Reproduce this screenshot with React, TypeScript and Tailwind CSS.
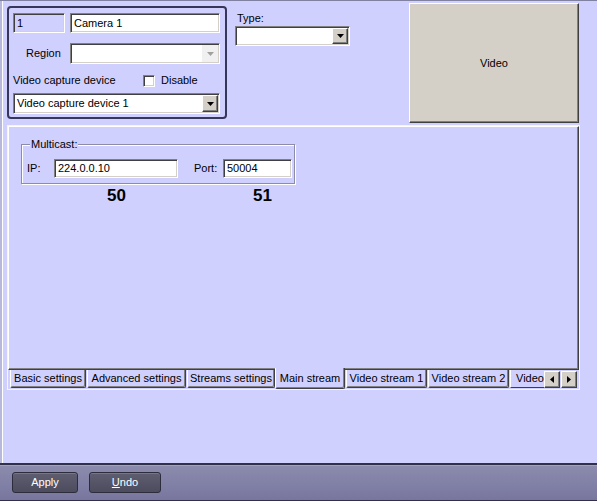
import React from 'react'

const sunken =
  'border border-t-[#808080] border-l-[#808080] border-b-white border-r-white shadow-[inset_1px_1px_0_#404040,inset_-1px_-1px_0_#d4d0c8]'
const raised =
  'border border-t-white border-l-white border-b-[#404040] border-r-[#404040] shadow-[inset_-1px_-1px_0_#808080] bg-[#d4d0c8]'

function DownArrow({ color = '#000' }: { color?: string }) {
  return (
    <svg width="7" height="4" viewBox="0 0 7 4">
      <path d="M0 0h7L3.5 4z" fill={color} />
    </svg>
  )
}

function Select({ className, value, disabled }: { className: string; value?: string; disabled?: boolean }) {
  return (
    <div className={`flex items-stretch bg-white ${sunken} ${className}`}>
      <div className="flex-1 pl-[3px] flex items-center whitespace-nowrap overflow-hidden">{value}</div>
      {disabled ? (
        <div className="w-[16px] m-[1px] flex items-center justify-center bg-[#f0f0f0]">
          <DownArrow color="#a0a0a0" />
        </div>
      ) : (
        <div className={`w-[16px] m-[1px] flex items-center justify-center ${raised}`}>
          <DownArrow />
        </div>
      )}
    </div>
  )
}

function Tab({ label, w }: { label: string; w: string }) {
  return (
    <div
      className={`${w} h-[18px] flex items-center justify-center whitespace-nowrap border-l border-l-white border-r border-r-[#404040] border-b border-b-[#404040] shadow-[inset_-1px_-1px_0_#808080] rounded-b-[2px]`}
    >
      {label}
    </div>
  )
}

function ScrollArrow({ dir }: { dir: 'left' | 'right' }) {
  return (
    <div className={`w-[16px] h-[17px] flex items-center justify-center ${raised}`}>
      <svg width="4" height="7" viewBox="0 0 4 7">
        <path d={dir === 'left' ? 'M4 0v7L0 3.5z' : 'M0 0v7l4-3.5z'} fill="#000" />
      </svg>
    </div>
  )
}

export default function App() {
  return (
    <div className="w-[597px] h-[501px] bg-[#d0d0ff] flex flex-col overflow-hidden text-black font-['Liberation_Sans',Arial,sans-serif] text-[11px] leading-[13px] shadow-[inset_0_1px_0_#8080a0,inset_2px_0_0_#b8b8dc,inset_3px_0_0_#ffffff]">
      {/* Top section */}
      <div className="h-[124px] mt-[1px] flex items-start pl-[7px] shrink-0">
        {/* Camera group */}
        <div className="mt-[5px] w-[220px] h-[113px] border-2 border-[#36365a] rounded-[4px] pl-[4px] pt-[5px] flex flex-col">
          <div className="flex">
            <div className={`w-[52px] h-[20px] bg-[#d0d0ff] pl-[3px] flex items-center ${sunken}`}>1</div>
            <div className={`ml-[5px] w-[150px] h-[20px] bg-white pl-[3px] flex items-center ${sunken}`}>Camera 1</div>
          </div>
          <div className="flex items-center mt-[10px]">
            <span className="w-[57px] pl-[13px]">Region</span>
            <Select className="w-[150px] h-[21px]" disabled />
          </div>
          <div className="flex items-center mt-[10px] h-[13px]">
            <span className="w-[130px]">Video capture device</span>
            <div className={`w-[12px] h-[12px] bg-white ${sunken}`} />
            <span className="ml-[6px]">Disable</span>
          </div>
          <Select className="mt-[6px] w-[207px] h-[21px]" value="Video capture device 1" />
        </div>

        {/* Type */}
        <div className="ml-[8px] mt-[11px] flex flex-col">
          <span className="pl-[2px]">Type:</span>
          <Select className="mt-[1px] w-[115px] h-[20px]" />
        </div>

        {/* Video preview */}
        <div className="ml-auto mr-[18px] mt-[2px] w-[170px] h-[120px] bg-[#d4d0c8] border border-t-white border-l-white border-b-[#404040] border-r-[#404040] shadow-[inset_-1px_-1px_0_#808080] flex items-center justify-center">
          Video
        </div>
      </div>

      {/* Tab control */}
      <div className="ml-[7px] w-[573px] h-[265px] shrink-0 border border-[#f4f4ff] flex flex-col">
        <div className="h-[244px] border-t border-l border-t-white border-l-white border-r border-b border-r-[#404040] border-b-[#404040] shadow-[inset_-1px_-1px_0_#808080] pl-[12px] pt-[17px]">
          <div className="relative w-[274px] h-[40px] border border-[#8c8ca8] shadow-[1px_1px_0_#ffffff,inset_1px_1px_0_#ffffff] pl-[5px] pt-[14px]">
            <span className="absolute left-[8px] top-[-7px] px-[1px] bg-[#d0d0ff]">Multicast:</span>
            <div className="flex items-center">
              <span className="w-[27px]">IP:</span>
              <div className={`w-[124px] h-[19px] bg-white pl-[3px] flex items-center ${sunken}`}>224.0.0.10</div>
              <span className="ml-[16px] w-[29px]">Port:</span>
              <div className={`w-[69px] h-[19px] bg-white pl-[3px] flex items-center ${sunken}`}>50004</div>
            </div>
          </div>
          <div className="flex mt-[3px] text-[17px] leading-[17px] font-bold">
            <span className="ml-[86px]">50</span>
            <span className="ml-[127px]">51</span>
          </div>
        </div>
        <div className="h-[19px] flex items-start pl-[2px]">
          <Tab label="Basic settings" w="w-[76px]" />
          <div className="w-[1px]" />
          <Tab label="Advanced settings" w="w-[99px]" />
          <div className="w-[1px]" />
          <Tab label="Streams settings" w="w-[88px]" />
          <div className="relative z-10 -mt-[2px] w-[70px] h-[21px] bg-[#d0d0ff] flex items-center justify-center whitespace-nowrap border-l border-l-white border-r border-r-[#404040] border-b border-b-[#404040] shadow-[inset_-1px_-1px_0_#808080] rounded-b-[2px]">
            Main stream
          </div>
          <div className="w-[1px]" />
          <Tab label="Video stream 1" w="w-[81px]" />
          <div className="w-[1px]" />
          <Tab label="Video stream 2" w="w-[81px]" />
          <div className="w-[1px]" />
          <div className="w-[34px] h-[18px] overflow-hidden flex items-center whitespace-nowrap border-l border-l-white border-b border-b-[#404040] pl-[5px]">
            Video
          </div>
          <div className="flex gap-[1px] mt-[1px]">
            <ScrollArrow dir="left" />
            <ScrollArrow dir="right" />
          </div>
        </div>
      </div>

      <div className="flex-1" />

      {/* Footer */}
      <div className="h-[38px] shrink-0 border-t-2 border-t-[#303048] border-b border-b-[#303048] bg-gradient-to-b from-[#8c8cae] to-[#78769e] shadow-[inset_0_1px_0_#a0a0c0] flex items-start pt-[7px] pl-[12px] gap-[11px]">
        <button className="w-[66px] h-[21px] rounded-[3px] border border-[#2c2c3c] bg-gradient-to-b from-[#5e5e70] to-[#4c4c5e] text-white shadow-[inset_0_1px_0_#77778a]">
          Apply
        </button>
        <button className="w-[72px] h-[21px] rounded-[3px] border border-[#2c2c3c] bg-gradient-to-b from-[#5e5e70] to-[#4c4c5e] text-white shadow-[inset_0_1px_0_#77778a]">
          <span className="underline">U</span>ndo
        </button>
      </div>
    </div>
  )
}
